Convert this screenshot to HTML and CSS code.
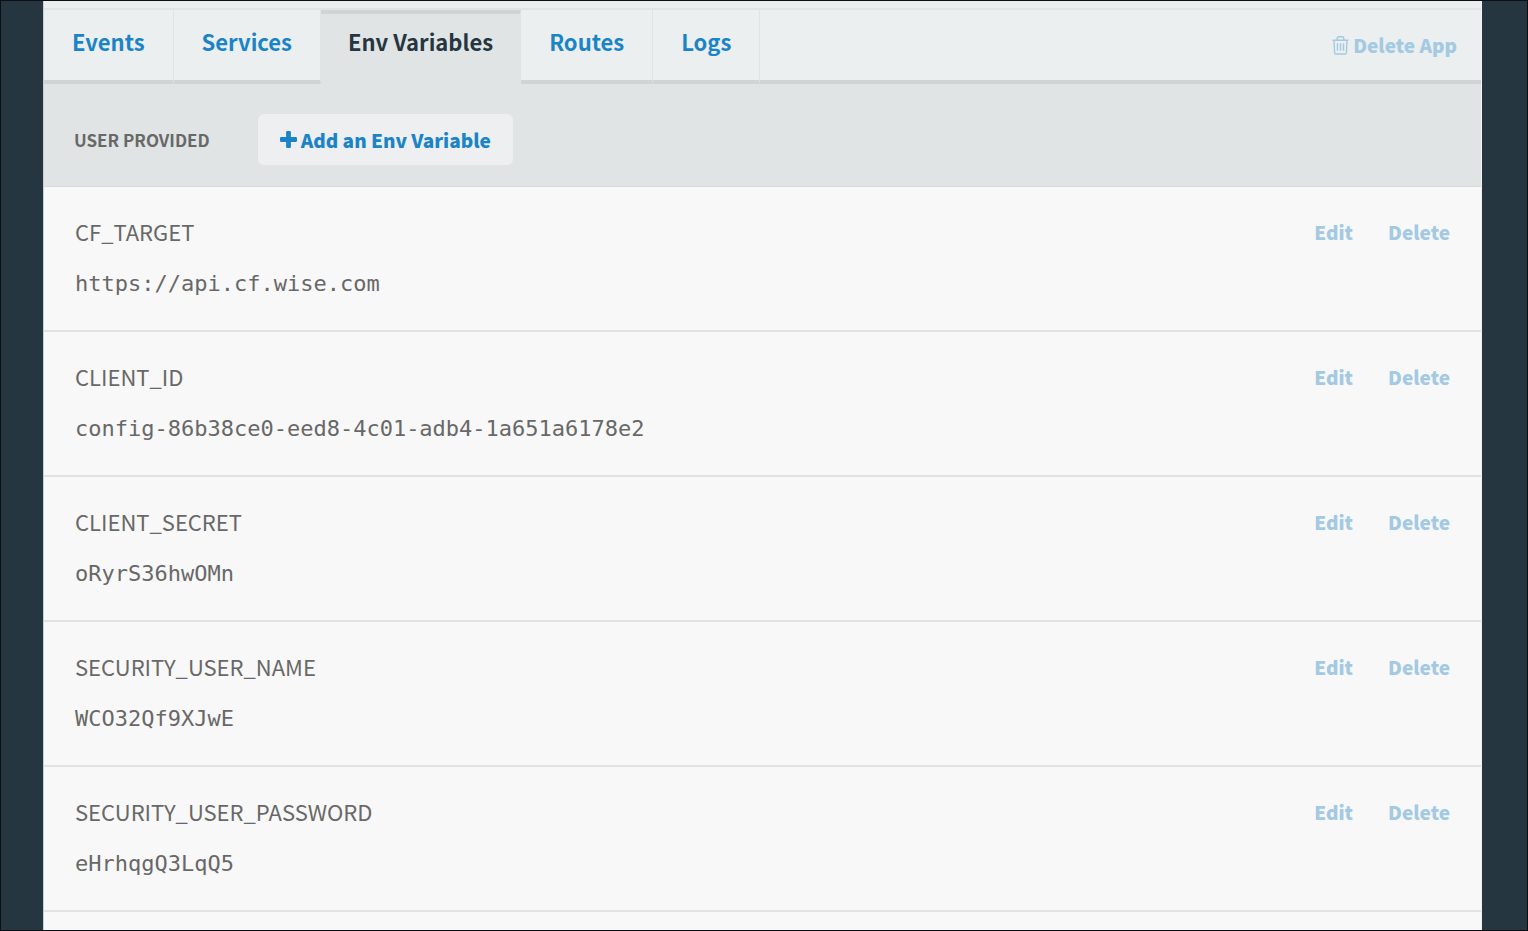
FILE: index.html
```html
<!DOCTYPE html>
<html lang="en">
<head>
<meta charset="utf-8">
<title>Env Variables</title>
<link rel="stylesheet" href="styles.css">
</head>
<body>
<div class="frame">
  <main class="panel">
    <div class="bar">
      <nav class="tabs" aria-label="App sections">
        <a class="tab" href="#events">Events</a>
        <a class="tab" href="#services">Services</a>
        <a class="tab tab-active" href="#env" aria-current="page">Env Variables</a>
        <a class="tab" href="#routes">Routes</a>
        <a class="tab" href="#logs">Logs</a>
      </nav>
      <div class="bar-actions">
        <button class="action" type="button">
          <svg class="trash" viewBox="0 0 17 19" aria-hidden="true"><path d="M.5 4.2h16M2 4.5l.6 12.2q.1 1.3 1.4 1.3h9q1.3 0 1.4-1.3L15 4.5M5.2 4V2.200q0-1.400 1.400-1.400h3.800q1.400 0 1.400 1.400V4M5.500 7.200v7.500M8.500 7.200v7.500M11.500 7.200v7.500"/></svg>
          <span>Delete App</span>
        </button>
      </div>
    </div>
    <header class="group-head">
      <h2 class="group-title">USER PROVIDED</h2>
      <button class="add" type="button">
        <svg class="plus" viewBox="0 0 17 17" aria-hidden="true"><path d="M7.300 0h2.400q1.200 0 1.200 1.200v4.900h4.900q1.200 0 1.200 1.200v2.400q0 1.200-1.200 1.200h-4.900v4.900q0 1.200-1.200 1.200H7.300q-1.200 0-1.200-1.200v-4.900H1.200Q0 10.900 0 9.700V7.300q0-1.200 1.200-1.200h4.900V1.200Q6.100 0 7.300 0z"/></svg>
        <span>Add an Env Variable</span>
      </button>
    </header>
    <ul class="vars">
      <li class="var">
        <div class="var-text"><h3 class="name">CF_TARGET</h3><code class="value">https://api.cf.wise.com</code></div>
        <div class="var-actions"><button class="action" type="button">Edit</button><button class="action" type="button">Delete</button></div>
      </li>
      <li class="var">
        <div class="var-text"><h3 class="name">CLIENT_ID</h3><code class="value">config-86b38ce0-eed8-4c01-adb4-1a651a6178e2</code></div>
        <div class="var-actions"><button class="action" type="button">Edit</button><button class="action" type="button">Delete</button></div>
      </li>
      <li class="var">
        <div class="var-text"><h3 class="name">CLIENT_SECRET</h3><code class="value">oRyrS36hwOMn</code></div>
        <div class="var-actions"><button class="action" type="button">Edit</button><button class="action" type="button">Delete</button></div>
      </li>
      <li class="var">
        <div class="var-text"><h3 class="name">SECURITY_USER_NAME</h3><code class="value">WCO32Qf9XJwE</code></div>
        <div class="var-actions"><button class="action" type="button">Edit</button><button class="action" type="button">Delete</button></div>
      </li>
      <li class="var">
        <div class="var-text"><h3 class="name">SECURITY_USER_PASSWORD</h3><code class="value">eHrhqgQ3LqQ5</code></div>
        <div class="var-actions"><button class="action" type="button">Edit</button><button class="action" type="button">Delete</button></div>
      </li>
    </ul>
  </main>
</div>
</body>
</html>
```
FILE: styles.css
```css
* { box-sizing: border-box; }

body {
  margin: 0;
  color: #686868;
  font-family: "Noto Sans CJK SC", "Noto Sans", sans-serif;
  font-size: 22px;
}

.frame {
  display: flex;
  min-height: 100vh;
  padding: 0 45px 0 42px;
  background: #253640;
  border: 1px solid #0b0f11;
}

.panel {
  flex: 1;
  min-width: 0;
  padding-top: 7px;
  background: #f8f8f8;
  border-left: 1px solid #c9ced1;
  border-right: 1px solid #f1f3f3;
  box-shadow: inset 0 8px 0 #ebeeef;
}

.bar {
  display: flex;
  height: 76px;
  background: #ebefef;
  border-top: 2px solid #e0e4e5;
}

.tabs { display: flex; }

.tab {
  padding: 12px 28px 0;
  border-right: 1px solid #e0e4e5;
  border-bottom: 4px solid #d0d4d5;
  color: #1b84c7;
  font-weight: 700;
  line-height: 38px;
  text-decoration: none;
}

.tab-active {
  padding: 8px 27px 0;
  background: #e0e4e5;
  border-top: 4px solid #d0d4d5;
  border-bottom-color: #e0e4e5;
  color: #253640;
}

.bar-actions {
  display: flex;
  flex: 1;
  align-items: center;
  justify-content: flex-end;
  padding-right: 24px;
  border-bottom: 4px solid #d0d4d5;
}

.action {
  display: flex;
  align-items: center;
  gap: 4px;
  padding: 0;
  background: none;
  border: 0;
  color: #a3c9e3;
  font: inherit;
  font-size: 19px;
  font-weight: 900;
  line-height: 28px;
}

.trash {
  width: 17px;
  height: 19px;
  fill: none;
  stroke: currentColor;
  stroke-width: 1.4;
}

.group-head {
  display: flex;
  align-items: center;
  gap: 48px;
  height: 103px;
  padding: 8px 30px 0;
  background: #e0e4e5;
  border-bottom: 1px solid #d8dadb;
}

.group-title {
  margin: 0;
  font-size: 17px;
  font-weight: 700;
}

.add {
  display: flex;
  align-items: center;
  gap: 4px;
  height: 51px;
  padding: 0 22px;
  background: #edeff0;
  border: 0;
  border-radius: 6px;
  color: #1b84c7;
  font: inherit;
  font-size: 19px;
  font-weight: 900;
}

.plus {
  width: 17px;
  height: 17px;
  fill: currentColor;
}

.vars {
  margin: 0;
  padding: 0;
  list-style: none;
}

.var {
  display: flex;
  justify-content: space-between;
  padding: 30px 31px 31px;
  border-bottom: 2px solid #e0e2e3;
}

.name {
  margin: 0 0 24px;
  font-size: 22px;
  font-weight: 400;
  line-height: 28px;
}

.value {
  display: block;
  font-family: "DejaVu Sans Mono", monospace;
  font-size: 22px;
  line-height: 30px;
}

.var-actions {
  display: flex;
  align-items: flex-start;
  gap: 35px;
}

.var-actions .action { line-height: 30px; }
```
